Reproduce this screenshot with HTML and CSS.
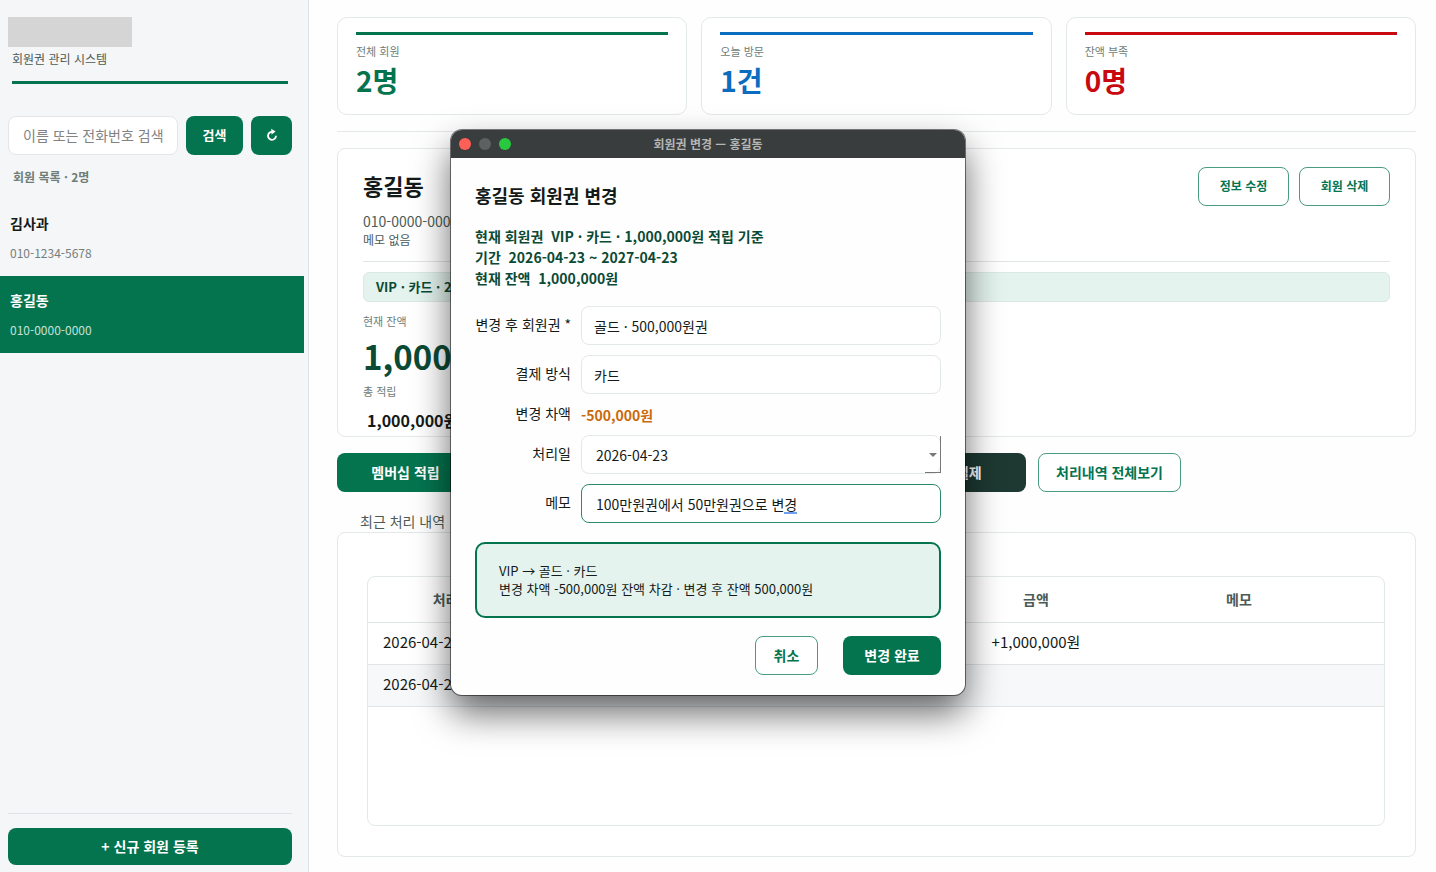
FILE: index.html
```html
<!DOCTYPE html>
<html lang="ko">
<head>
    <meta charset="UTF-8">
    <meta name="viewport" content="width=device-width, initial-scale=1.0">
    <title>회원권 관리 시스템</title>
    <link rel="stylesheet" href="styles.css">
</head>
<body>
    <aside class="sidebar">
        <div class="brand">
            <div class="brand-logo"></div>
            <p class="brand-sub">회원권 관리 시스템</p>
        </div>
        <form class="search">
            <input type="text" id="keyword" aria-label="회원 검색" placeholder="이름 또는 전화번호 검색">
            <button type="button" class="btn btn-search">검색</button>
            <button type="button" class="btn btn-refresh" aria-label="새로고침">
                <svg width="12" height="14" viewBox="0 0 12 14">
                    <path d="M6.4 3.8 A4 4 0 1 0 10 7.8" fill="none" stroke="#fff" stroke-width="1.8"/>
                    <path d="M5.2 0.8 L9.6 3.6 L5.6 6.6 Z" fill="#fff"/>
                </svg>
            </button>
        </form>
        <p class="list-title">회원 목록 · 2명</p>
        <ul class="member-list">
            <li class="member">
                <strong>김사과</strong>
                <span>010-1234-5678</span>
            </li>
            <li class="member selected">
                <strong>홍길동</strong>
                <span>010-0000-0000</span>
            </li>
        </ul>
        <div class="sidebar-footer">
            <button type="button" class="btn btn-new">+ 신규 회원 등록</button>
        </div>
    </aside>

    <main class="content">
        <section class="stats">
            <div class="stat green">
                <p class="stat-label">전체 회원</p>
                <p class="stat-value">2명</p>
            </div>
            <div class="stat blue">
                <p class="stat-label">오늘 방문</p>
                <p class="stat-value">1건</p>
            </div>
            <div class="stat red">
                <p class="stat-label">잔액 부족</p>
                <p class="stat-value">0명</p>
            </div>
        </section>

        <hr class="divider">

        <section class="card detail">
            <div class="detail-head">
                <div>
                    <h1>홍길동</h1>
                    <p class="phone">010-0000-0000</p>
                    <p class="note">메모 없음</p>
                </div>
                <div class="detail-buttons">
                    <button type="button" class="btn btn-outline btn-small">정보 수정</button>
                    <button type="button" class="btn btn-outline btn-small">회원 삭제</button>
                </div>
            </div>
            <div class="plan">VIP · 카드 · 2026-04-23</div>
            <p class="small-label">현재 잔액</p>
            <p class="balance">1,000,000원</p>
            <p class="small-label">총 적립</p>
            <p class="total">1,000,000원</p>
        </section>

        <div class="actions">
            <button type="button" class="btn btn-charge">멤버십 적립</button>
            <button type="button" class="btn btn-wide">잔액 차감</button>
            <button type="button" class="btn btn-wide">회원권 변경</button>
            <button type="button" class="btn btn-dark">일반 결제</button>
            <button type="button" class="btn btn-outline btn-history">처리내역 전체보기</button>
        </div>

        <h2 class="section-title">최근 처리 내역</h2>
        <section class="card history">
            <div class="table-box">
                <table>
                    <colgroup>
                        <col class="col-date">
                        <col>
                        <col class="col-amount">
                        <col class="col-memo">
                    </colgroup>
                    <thead>
                        <tr>
                            <th>처리일</th>
                            <th></th>
                            <th>금액</th>
                            <th>메모</th>
                        </tr>
                    </thead>
                    <tbody>
                        <tr>
                            <td class="date">2026-04-23</td>
                            <td></td>
                            <td>+1,000,000원</td>
                            <td></td>
                        </tr>
                        <tr>
                            <td class="date">2026-04-23</td>
                            <td></td>
                            <td></td>
                            <td></td>
                        </tr>
                    </tbody>
                </table>
            </div>
        </section>
    </main>

    <div class="window" role="dialog" aria-labelledby="windowTitle">
        <div class="titlebar">
            <span class="dot dot-close"></span>
            <span class="dot dot-min"></span>
            <span class="dot dot-max"></span>
            <span class="titlebar-text" id="windowTitle">회원권 변경 — 홍길동</span>
        </div>
        <form class="window-body">
            <h2>홍길동 회원권 변경</h2>
            <div class="current">
                <p>현재 회원권&nbsp; VIP · 카드 · 1,000,000원 적립 기준</p>
                <p>기간&nbsp; 2026-04-23 ~ 2027-04-23</p>
                <p>현재 잔액&nbsp; 1,000,000원</p>
            </div>
            <div class="fields">
                <label for="plan">변경 후 회원권 *</label>
                <select id="plan">
                    <option>골드 · 500,000원권</option>
                </select>

                <label for="payment">결제 방식</label>
                <select id="payment">
                    <option>카드</option>
                </select>

                <label for="diff">변경 차액</label>
                <output id="diff">-500,000원</output>

                <label for="date">처리일</label>
                <div class="date-field">
                    <input type="text" id="date" value="2026-04-23">
                    <span class="date-arrow"></span>
                </div>

                <label for="memo">메모</label>
                <div class="memo-field">
                    <input type="text" id="memo" value="100만원권에서 50만원권으로 변경">
                    <span class="ime-mark"></span>
                </div>
            </div>
            <div class="summary">
                <p>VIP → 골드 · 카드</p>
                <p>변경 차액 -500,000원 잔액 차감 · 변경 후 잔액 500,000원</p>
            </div>
            <div class="window-buttons">
                <button type="button" class="btn btn-outline btn-cancel">취소</button>
                <button type="button" class="btn btn-submit">변경 완료</button>
            </div>
        </form>
    </div>
</body>
</html>
```
FILE: styles.css
```css
* {
    box-sizing: border-box;
}
body {
    display: flex;
    position: relative;
    min-height: 100vh;
    margin: 0;
    font-family: "Noto Sans CJK KR", sans-serif;
    font-size: 14px;
    line-height: 20px;
    color: #141a18;
    background-color: #fefefe;
}
h1, h2, p, ul {
    margin: 0;
    padding: 0;
}
input, select, button {
    font-family: inherit;
    font-size: 14px;
    color: inherit;
}
.btn {
    height: 39px;
    padding: 0 0 2px;
    border: none;
    border-radius: 8px;
    background-color: #04744f;
    color: #fff;
    font-weight: bold;
    cursor: pointer;
}
.btn-outline {
    border: 1px solid #4a9c80;
    background-color: #fff;
    color: #04744f;
}

/* sidebar */
.sidebar {
    display: flex;
    flex-direction: column;
    flex: none;
    width: 309px;
    padding: 17px 16px 7px 8px;
    border-right: 1px solid #dfe3e6;
    background-color: #f4f6f8;
}
.brand {
    margin-right: 4px;
}
.brand-logo {
    width: 124px;
    height: 30px;
    background-color: #d5d5d5;
}
.brand-sub {
    margin-left: 4px;
    padding-bottom: 11px;
    border-bottom: 3px solid #04744f;
    font-size: 12px;
    line-height: 23px;
    color: #4b5b56;
}
.search {
    display: flex;
    gap: 8px;
    margin-top: 32px;
}
.search input {
    flex: 1;
    min-width: 0;
    height: 39px;
    padding: 0 14px 2px;
    border: 1px solid #e3e7e9;
    border-radius: 8px;
    background-color: #fff;
}
.search input::placeholder {
    color: #828282;
}
.btn-search {
    width: 57px;
    font-size: 13px;
}
.btn-refresh {
    display: flex;
    justify-content: center;
    align-items: center;
    width: 41px;
}
.list-title {
    margin: 12px 0 12px 5px;
    font-size: 12px;
    font-weight: bold;
    color: #6e7d78;
}
.member-list {
    flex: 1;
    margin: 0 -12px 0 -8px;
    list-style: none;
}
.member {
    display: flex;
    flex-direction: column;
    gap: 10px;
    padding: 14px 10px 13px;
}
.member span {
    font-size: 12px;
    color: #75807c;
}
.member.selected {
    background-color: #04744f;
    color: #fff;
}
.member.selected span {
    color: #c4e0d6;
}
.sidebar-footer {
    padding-top: 14px;
    border-top: 1px solid #dfe3e6;
}
.btn-new {
    width: 100%;
    height: 37px;
}

/* main area */
.content {
    display: flex;
    flex-direction: column;
    flex: 1;
    min-width: 0;
    padding: 17px 20px 15px 28px;
}
.stats {
    display: grid;
    grid-template-columns: repeat(3, 1fr);
    gap: 14px;
}
.stat {
    padding: 14px 18px 13px;
    border: 1px solid #e3e8e8;
    border-radius: 10px;
    background-color: #fff;
}
.stat-label {
    padding-top: 8px;
    border-top: 3px solid;
    font-size: 11px;
    line-height: 16px;
    color: #6e7d78;
}
.stat-value {
    font-size: 28px;
    font-weight: bold;
    line-height: 42px;
}
.green .stat-label {
    border-color: #04744f;
}
.green .stat-value {
    color: #04744f;
}
.blue .stat-label {
    border-color: #0b6cc0;
}
.blue .stat-value {
    color: #0b6cc0;
}
.red .stat-label {
    border-color: #c80a10;
}
.red .stat-value {
    color: #c80a10;
}
.divider {
    width: 100%;
    margin: 16px 0;
    border: none;
    border-top: 1px solid #e3e8e8;
}
.card {
    border: 1px solid #e3e8e8;
    border-radius: 8px;
    background-color: #fff;
}
.detail {
    padding: 18px 25px 4px;
}
.detail-head {
    display: flex;
    justify-content: space-between;
    padding-bottom: 12px;
    border-bottom: 1px solid #e0e5e5;
}
.detail h1 {
    font-size: 22px;
    line-height: 36px;
}
.phone {
    margin-top: 8px;
    color: #4b5b56;
}
.note {
    font-size: 12px;
    line-height: 18px;
    color: #4b5b56;
}
.detail-buttons {
    display: flex;
    gap: 10px;
}
.btn-small {
    width: 91px;
    font-size: 12px;
}
.plan {
    margin: 10px 0;
    padding: 0 12px;
    border: 1px solid #dbe8e3;
    border-radius: 6px;
    background-color: #e4f3ee;
    font-size: 13px;
    font-weight: bold;
    line-height: 28px;
    color: #0b4a35;
}
.small-label {
    font-size: 11px;
    line-height: 18px;
    color: #6e7d78;
}
.balance {
    margin: 2px 0;
    font-size: 33px;
    font-weight: bold;
    line-height: 48px;
    color: #0b4a35;
}
.total {
    margin: 8px 0 0 4px;
    font-size: 16px;
    font-weight: bold;
    line-height: 24px;
}
.actions {
    display: flex;
    gap: 12px;
    margin-top: 16px;
}
.btn-charge {
    width: 137px;
}
.btn-wide {
    width: 186px;
}
.btn-dark {
    width: 144px;
    background-color: #1e3932;
}
.btn-history {
    width: 143px;
}
.section-title {
    margin: 19px 0 1px 23px;
    font-size: 14px;
    font-weight: normal;
    color: #4b5b56;
}
.history {
    display: flex;
    flex: 1;
    padding: 43px 30px 30px 29px;
}
.table-box {
    flex: 1;
    border: 1px solid #e3e8e8;
    border-radius: 8px;
}
table {
    width: 100%;
    border-collapse: collapse;
    table-layout: fixed;
}
.col-date {
    width: 168px;
}
.col-amount {
    width: 116px;
}
.col-memo {
    width: 290px;
}
th {
    height: 45px;
    padding: 0;
    border-bottom: 1px solid #e0e5e5;
    color: #4b5b56;
}
td {
    height: 42px;
    padding: 0 0 2px;
    border-bottom: 1px solid #e0e5e5;
    font-size: 15px;
    text-align: center;
}
td.date {
    padding-left: 15px;
    text-align: left;
}
tbody tr:nth-child(even) {
    background-color: #f6f8fa;
}

/* change window */
.window {
    position: absolute;
    top: 130px;
    left: calc(50% - 267px);
    width: 514px;
    border-radius: 11px;
    background-color: #fefefe;
    box-shadow: 0 0 0 1px rgba(0, 0, 0, 0.5), 0 18px 36px rgba(0, 0, 0, 0.6);
    overflow: hidden;
}
.titlebar {
    display: flex;
    position: relative;
    align-items: center;
    gap: 8px;
    height: 28px;
    padding: 0 8px;
    background-color: #393d3d;
}
.dot {
    width: 12px;
    height: 12px;
    border-radius: 50%;
}
.dot-close {
    background-color: #ff5f57;
}
.dot-min {
    background-color: #5c6162;
}
.dot-max {
    background-color: #28c840;
}
.titlebar-text {
    position: absolute;
    right: 0;
    left: 0;
    font-size: 12px;
    font-weight: bold;
    text-align: center;
    color: #b4b6b6;
}
.window-body {
    padding: 24px 24px 20px;
}
.window-body h2 {
    font-size: 18px;
    line-height: 26px;
}
.current {
    margin: 18px 0 17px;
    font-weight: bold;
    line-height: 21px;
    color: #0b4a35;
}
.fields {
    display: grid;
    grid-template-columns: 96px 1fr;
    align-items: center;
    gap: 10px;
}
.fields label {
    padding-bottom: 3px;
    line-height: 18px;
    text-align: right;
    white-space: nowrap;
}
.fields select,
.fields input {
    display: block;
    width: 100%;
    height: 39px;
    padding: 0 12px;
    border: 1px solid #e3e8e8;
    border-radius: 8px;
    background-color: #fff;
    outline: none;
    appearance: none;
}
.fields input {
    padding: 0 14px;
}
.fields output {
    font-weight: bold;
    color: #c96a0a;
}
.date-field,
.memo-field {
    position: relative;
}
.date-arrow {
    position: absolute;
    right: 0;
    bottom: 1px;
    width: 16px;
    height: 37px;
    border-right: 1px solid #777;
    border-bottom: 1px solid #777;
}
.date-arrow::after {
    content: "";
    position: absolute;
    top: 17px;
    right: 3px;
    border: 4px solid transparent;
    border-top-color: #777;
    border-bottom: none;
}
.fields #memo {
    border-color: #2c8a69;
}
.ime-mark {
    position: absolute;
    bottom: 9px;
    left: 203px;
    width: 13px;
    height: 2px;
    background-color: #6f9ff0;
}
.summary {
    margin: 19px 0 18px;
    padding: 18px 22px;
    border: 2px solid #04744f;
    border-radius: 10px;
    background-color: #e4f3ee;
    font-size: 13px;
    line-height: 18px;
}
.window-buttons {
    display: flex;
    justify-content: flex-end;
    gap: 25px;
}
.btn-cancel {
    width: 63px;
}
.btn-submit {
    width: 98px;
}
```
